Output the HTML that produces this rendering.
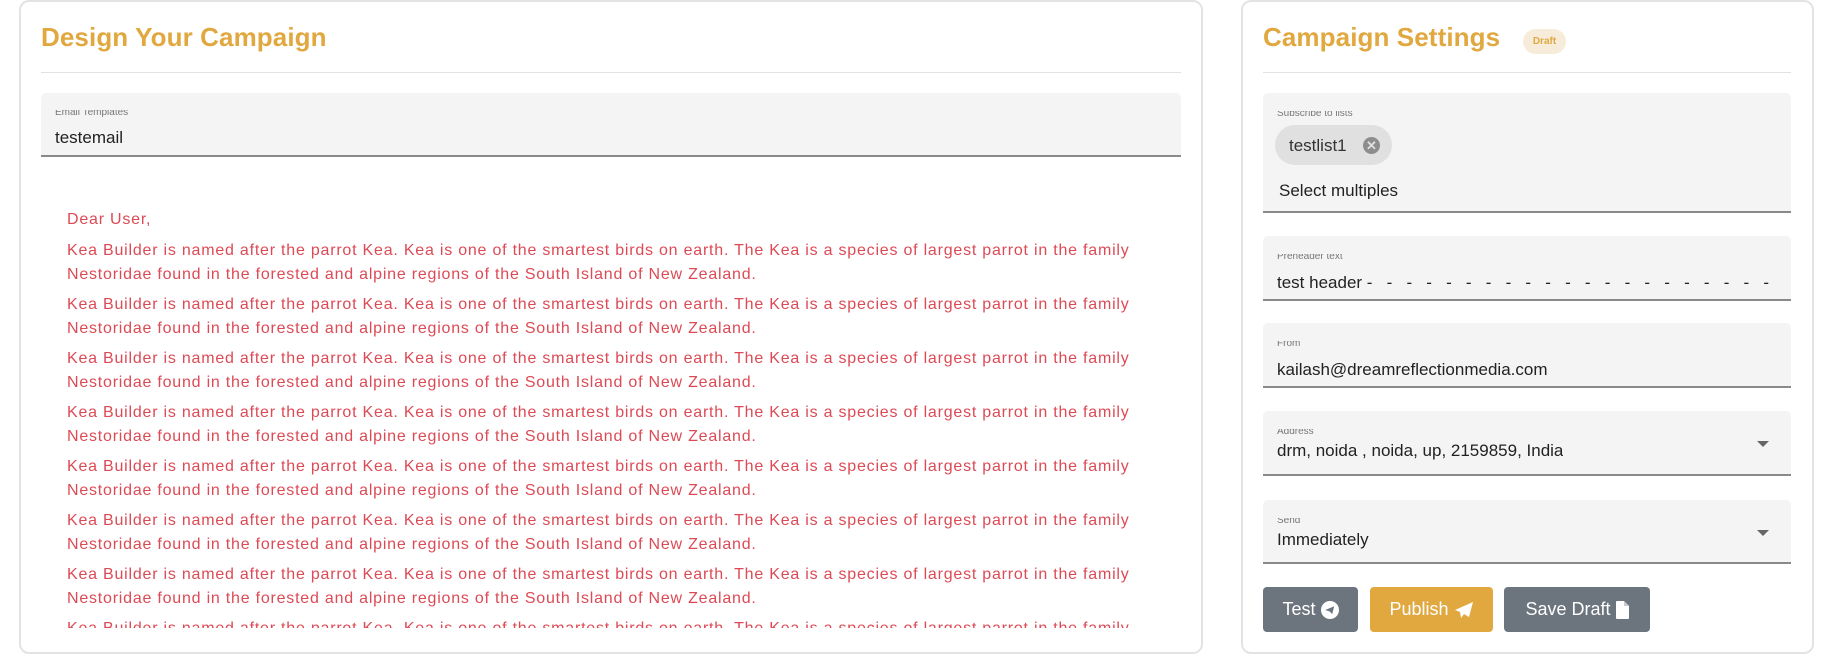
<!DOCTYPE html>
<html><head><meta charset="utf-8"><style>
*{box-sizing:border-box;margin:0;padding:0}
body{width:1832px;height:655px;background:#fff;font-family:"Liberation Sans",sans-serif;position:relative;overflow:hidden}
.card{position:absolute;border:2px solid #e3e3e3;border-radius:10px;background:#fff}
.title{position:absolute;color:#e0a83f;font-size:26px;font-weight:bold;letter-spacing:0.1px}
.hr{position:absolute;height:1px;background:#e2e2e2}
.field{position:absolute;background:#f4f4f4;border-radius:5px 5px 0 0;border-bottom:2px solid #8a8a8a}
.lbl{position:absolute;left:14px;top:0;font-size:10px;color:#777;height:10px;overflow:hidden;line-height:6px}
.val{position:absolute;left:14px;font-size:17px;color:#222;overflow:hidden;white-space:nowrap}
.red{position:absolute;left:26px;color:#dc4a55;font-size:16px;letter-spacing:0.78px;white-space:nowrap;line-height:24px}
.btn{position:absolute;top:587px;height:45px;border-radius:4px;color:#fff;font-size:18px;display:flex;align-items:center;justify-content:center;gap:5px}
.arrow{position:absolute;right:22px;width:0;height:0;border-left:6px solid transparent;border-right:6px solid transparent;border-top:6px solid #666}
</style></head><body>
<div class="card" style="left:19px;top:0;width:1184px;height:654px"></div>
<div class="title" style="left:41px;top:22px">Design Your Campaign</div>
<div class="hr" style="left:41px;top:72px;width:1140px"></div>
<div class="field" style="left:41px;top:93px;width:1140px;height:64px"><div class="lbl" style="top:17px">Email Templates</div><div class="val" style="top:35px;height:19px">testemail</div></div>
<div style="position:absolute;left:41px;top:182px;width:1140px;height:446px;overflow:hidden">
<div class="red" style="top:26px">Dear User,</div>
<div class="red" style="top:57px">Kea Builder is named after the parrot Kea. Kea is one of the smartest birds on earth. The Kea is a species of largest parrot in the family<br>Nestoridae found in the forested and alpine regions of the South Island of New Zealand.</div>
<div class="red" style="top:111px">Kea Builder is named after the parrot Kea. Kea is one of the smartest birds on earth. The Kea is a species of largest parrot in the family<br>Nestoridae found in the forested and alpine regions of the South Island of New Zealand.</div>
<div class="red" style="top:165px">Kea Builder is named after the parrot Kea. Kea is one of the smartest birds on earth. The Kea is a species of largest parrot in the family<br>Nestoridae found in the forested and alpine regions of the South Island of New Zealand.</div>
<div class="red" style="top:219px">Kea Builder is named after the parrot Kea. Kea is one of the smartest birds on earth. The Kea is a species of largest parrot in the family<br>Nestoridae found in the forested and alpine regions of the South Island of New Zealand.</div>
<div class="red" style="top:273px">Kea Builder is named after the parrot Kea. Kea is one of the smartest birds on earth. The Kea is a species of largest parrot in the family<br>Nestoridae found in the forested and alpine regions of the South Island of New Zealand.</div>
<div class="red" style="top:327px">Kea Builder is named after the parrot Kea. Kea is one of the smartest birds on earth. The Kea is a species of largest parrot in the family<br>Nestoridae found in the forested and alpine regions of the South Island of New Zealand.</div>
<div class="red" style="top:381px">Kea Builder is named after the parrot Kea. Kea is one of the smartest birds on earth. The Kea is a species of largest parrot in the family<br>Nestoridae found in the forested and alpine regions of the South Island of New Zealand.</div>
<div class="red" style="top:435px">Kea Builder is named after the parrot Kea. Kea is one of the smartest birds on earth. The Kea is a species of largest parrot in the family</div>
</div>

<div class="card" style="left:1241px;top:0;width:573px;height:654px"></div>
<div class="title" style="left:1263px;top:22px">Campaign Settings</div>
<div style="position:absolute;left:1523px;top:29px;width:43px;height:25px;border-radius:13px;background:#f6ecd9;color:#e0a83f;font-size:10px;font-weight:bold;display:flex;align-items:center;justify-content:center">Draft</div>
<div class="hr" style="left:1263px;top:72px;width:528px"></div>

<div class="field" style="left:1263px;top:93px;width:528px;height:120px"><div class="lbl" style="top:18px">Subscribe to lists</div>
<div style="position:absolute;left:12px;top:32px;width:117px;height:40px;border-radius:20px;background:#e0e0e0;font-size:17px;color:#333;padding:11px 0 0 14px">testlist1<span style="position:absolute;right:12px;top:12px;width:17px;height:17px;border-radius:50%;background:#8d8d8d;color:#e0e0e0;font-size:13px;line-height:17px;text-align:center;font-weight:bold">✕</span></div>
<div class="val" style="left:16px;top:88px;height:18px;font-size:17px">Select multiples</div></div>

<div class="field" style="left:1263px;top:236px;width:528px;height:65px"><div class="lbl" style="top:18px">Preheader text</div><div class="val" style="top:37px;height:18px">test header -&nbsp;&nbsp; - &nbsp;&nbsp;- &nbsp;&nbsp;- &nbsp;&nbsp;- &nbsp;&nbsp;- &nbsp;&nbsp;- &nbsp;&nbsp;- &nbsp;&nbsp;- &nbsp;&nbsp;- &nbsp;&nbsp;- &nbsp;&nbsp;- &nbsp;&nbsp;- &nbsp;&nbsp;- &nbsp;&nbsp;- &nbsp;&nbsp;- &nbsp;&nbsp;- &nbsp;&nbsp;- &nbsp;&nbsp;- &nbsp;&nbsp;- &nbsp;&nbsp;-</div></div>
<div class="field" style="left:1263px;top:323px;width:528px;height:65px"><div class="lbl" style="top:18px">From</div><div class="val" style="top:37px;height:18px">kailash@dreamreflectionmedia.com</div></div>
<div class="field" style="left:1263px;top:411px;width:528px;height:65px"><div class="lbl" style="top:18px">Address</div><div class="val" style="top:30px">drm, noida , noida, up, 2159859, India</div><div class="arrow" style="top:30px"></div></div>
<div class="field" style="left:1263px;top:500px;width:528px;height:64px"><div class="lbl" style="top:18px">Send</div><div class="val" style="top:30px">Immediately</div><div class="arrow" style="top:30px"></div></div>

<div class="btn" style="left:1263px;width:95px;background:#6c757d">Test <span style="display:inline-block;width:18px;height:18px;border-radius:50%;background:#fff;position:relative"><svg width="18" height="18" viewBox="0 0 17 17" style="position:absolute;left:0;top:0"><path d="M4 8.5 L12.5 5 L10.5 12.5 L8.5 10 Z" fill="#6c757d"/></svg></span></div>
<div class="btn" style="left:1370px;width:123px;background:#e0a83f">Publish <svg width="20" height="18" viewBox="0 0 20 18"><path d="M19 1 L1 9 L6 11 L7 17 L10 13 L15 16 Z" fill="#fff"/></svg></div>
<div class="btn" style="left:1504px;width:146px;background:#6c757d">Save Draft <svg width="13" height="18" viewBox="0 0 13 18"><path d="M1 0 H8 L13 5 V17 a1 1 0 0 1 -1 1 H1 a1 1 0 0 1 -1 -1 V1 a1 1 0 0 1 1 -1 Z" fill="#fff"/><path d="M8 0 V5 H13" fill="#ccc"/></svg></div>
</body></html>
